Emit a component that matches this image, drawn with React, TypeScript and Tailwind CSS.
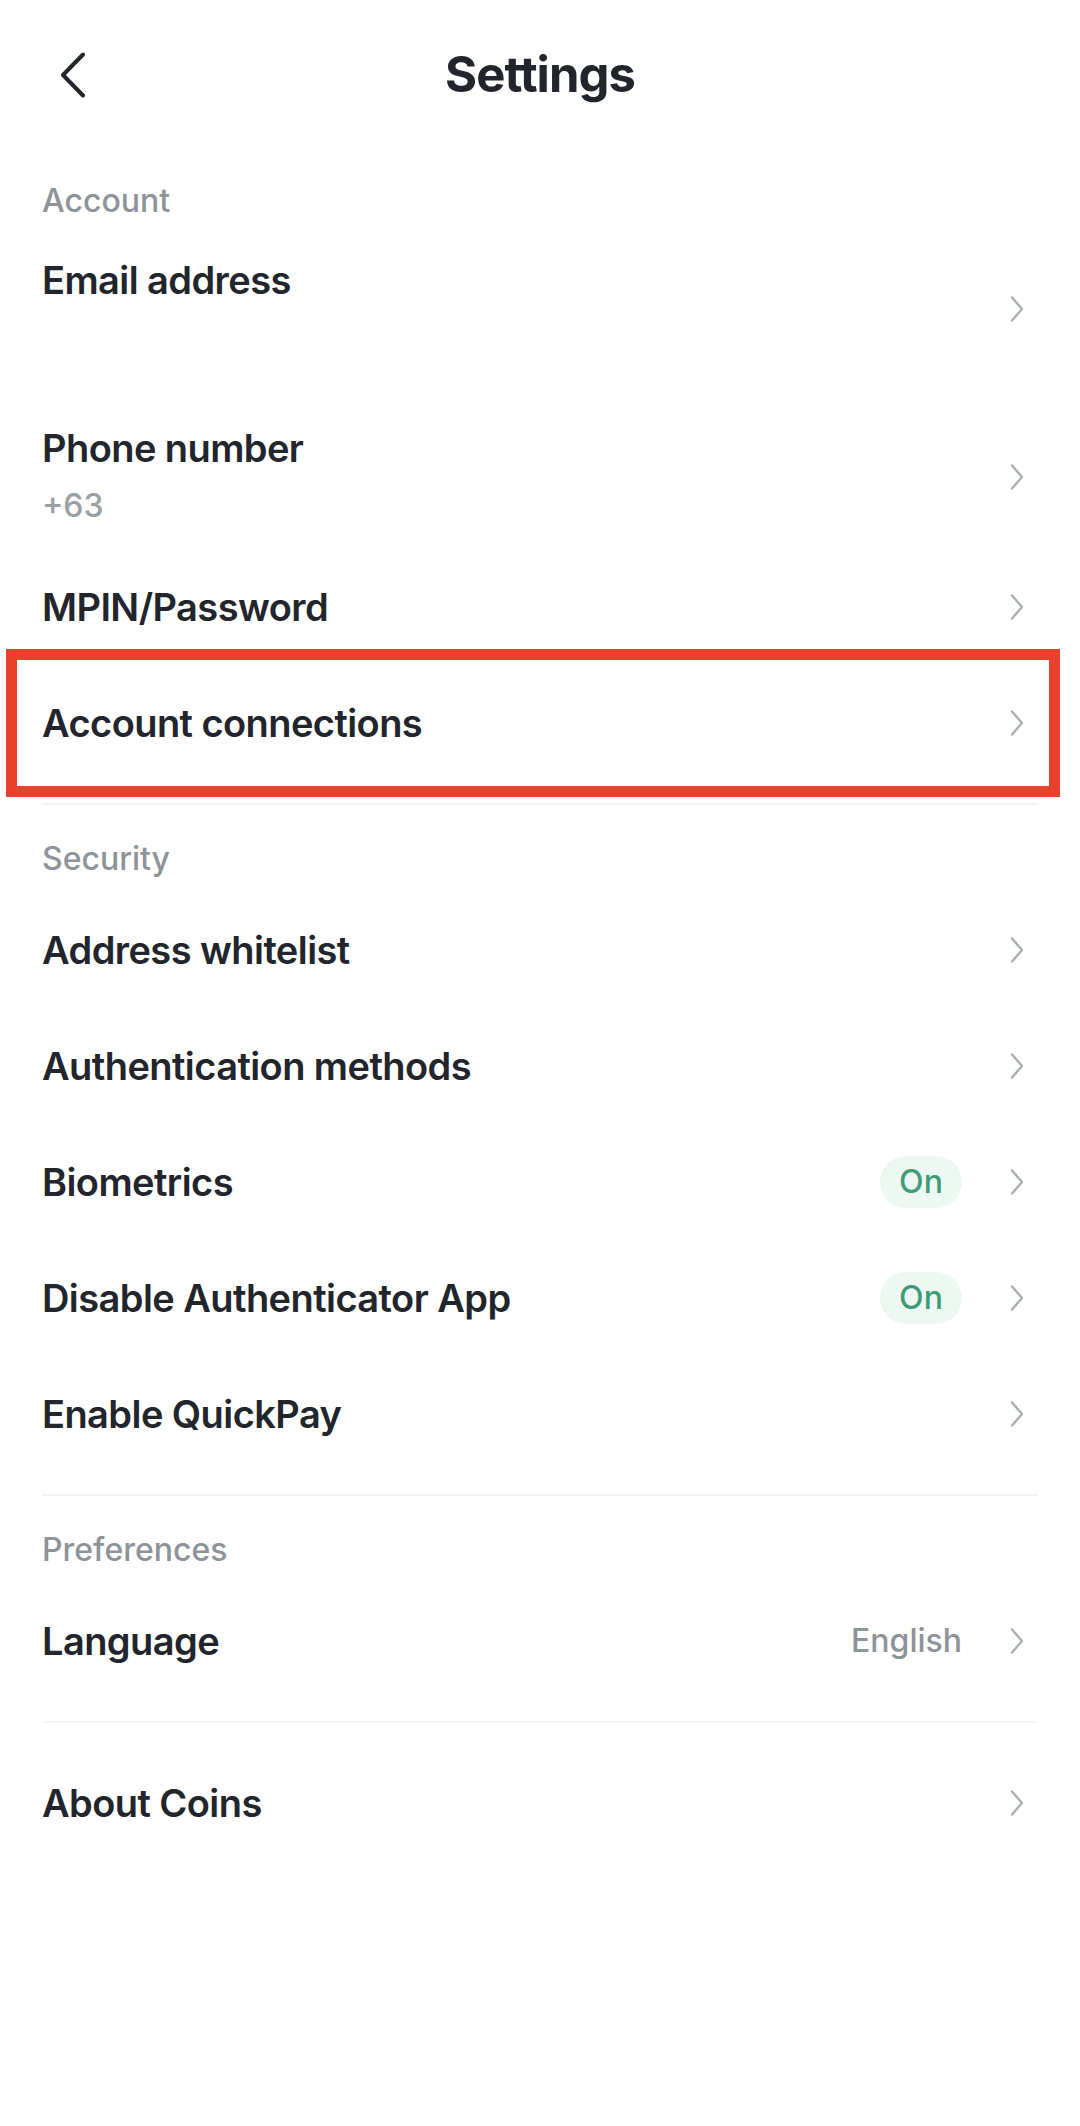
import { ReactNode } from 'react';

const font = { fontFamily: 'Inter, "Noto Sans", sans-serif' };

function Chevron() {
  return (
    <svg width="14" height="26" viewBox="0 0 14 26" fill="none" className="shrink-0">
      <path
        d="M2 1.5L12 13L2 24.5"
        stroke="#A9ADB4"
        strokeWidth="2.4"
        strokeLinecap="round"
        strokeLinejoin="round"
      />
    </svg>
  );
}

function OnBadge() {
  return (
    <span className="flex h-[52px] w-[82px] items-center justify-center rounded-full bg-[#EEF8F3] text-[32px] font-medium text-[#3E9B78]">
      On
    </span>
  );
}

function SectionLabel({ children }: { children: ReactNode }) {
  return (
    <div className="px-[42px] pt-[12px] text-[32px] font-medium leading-[40px] text-[#8E9299]">
      {children}
    </div>
  );
}

function Row({ title, right }: { title: string; right?: ReactNode }) {
  return (
    <div className="flex h-[116px] items-center justify-between pl-[42px] pr-[56px]">
      <span className="text-[38px] font-semibold leading-[48px] tracking-[-0.015em] text-[#22252B]">
        {title}
      </span>
      <div className="flex items-center gap-[48px]">
        {right}
        <Chevron />
      </div>
    </div>
  );
}

function Divider() {
  return <div className="mx-[42px] my-[22px] h-[2px] bg-[#F3F4F6]" />;
}

export default function App() {
  return (
    <div className="min-h-[2126px] w-full bg-white" style={font}>
      {/* Header */}
      <header className="relative flex h-[150px] items-center justify-center">
        <button className="absolute left-[58px] top-[52px] p-0">
          <svg width="30" height="46" viewBox="0 0 30 46" fill="none">
            <path
              d="M25 2.5L5 23L25 43.5"
              stroke="#22252B"
              strokeWidth="4"
              strokeLinecap="round"
              strokeLinejoin="round"
            />
          </svg>
        </button>
        <h1 className="text-[49px] font-bold tracking-[-0.02em] text-[#22252B]">Settings</h1>
      </header>

      {/* Account */}
      <div className="px-[42px] pt-[31px] text-[32px] font-medium leading-[40px] text-[#8E9299]">
        Account
      </div>

      <div className="flex items-center justify-between pb-[31px] pl-[42px] pr-[56px] pt-[35px]">
        <div className="flex flex-col">
          <span className="text-[38px] font-semibold leading-[48px] tracking-[-0.015em] text-[#22252B]">
            Email address
          </span>
          <span className="mt-[10px] h-[48px]" />
        </div>
        <Chevron />
      </div>

      <div className="flex items-center justify-between pb-[19px] pl-[42px] pr-[56px] pt-[31px]">
        <div className="flex flex-col">
          <span className="text-[38px] font-semibold leading-[48px] tracking-[-0.015em] text-[#22252B]">
            Phone number
          </span>
          <span className="mt-[10px] text-[32px] font-medium leading-[48px] text-[#9A9EA5]">+63</span>
        </div>
        <Chevron />
      </div>

      <Row title="MPIN/Password" />

      <div className="relative">
        <Row title="Account connections" />
        <div className="pointer-events-none absolute -bottom-[16px] -top-[16px] left-[6px] right-[20px] border-[11px] border-[#E8412C]" />
      </div>

      <Divider />

      {/* Security */}
      <SectionLabel>Security</SectionLabel>
      <div className="pt-[13px]">
        <Row title="Address whitelist" />
        <Row title="Authentication methods" />
        <Row title="Biometrics" right={<OnBadge />} />
        <Row title="Disable Authenticator App" right={<OnBadge />} />
        <Row title="Enable QuickPay" />
      </div>

      <Divider />

      {/* Preferences */}
      <SectionLabel>Preferences</SectionLabel>
      <div className="pt-[13px]">
        <Row
          title="Language"
          right={<span className="text-[32px] font-medium text-[#8E9299]">English</span>}
        />
      </div>

      <Divider />

      <Row title="About Coins" />
    </div>
  );
}
